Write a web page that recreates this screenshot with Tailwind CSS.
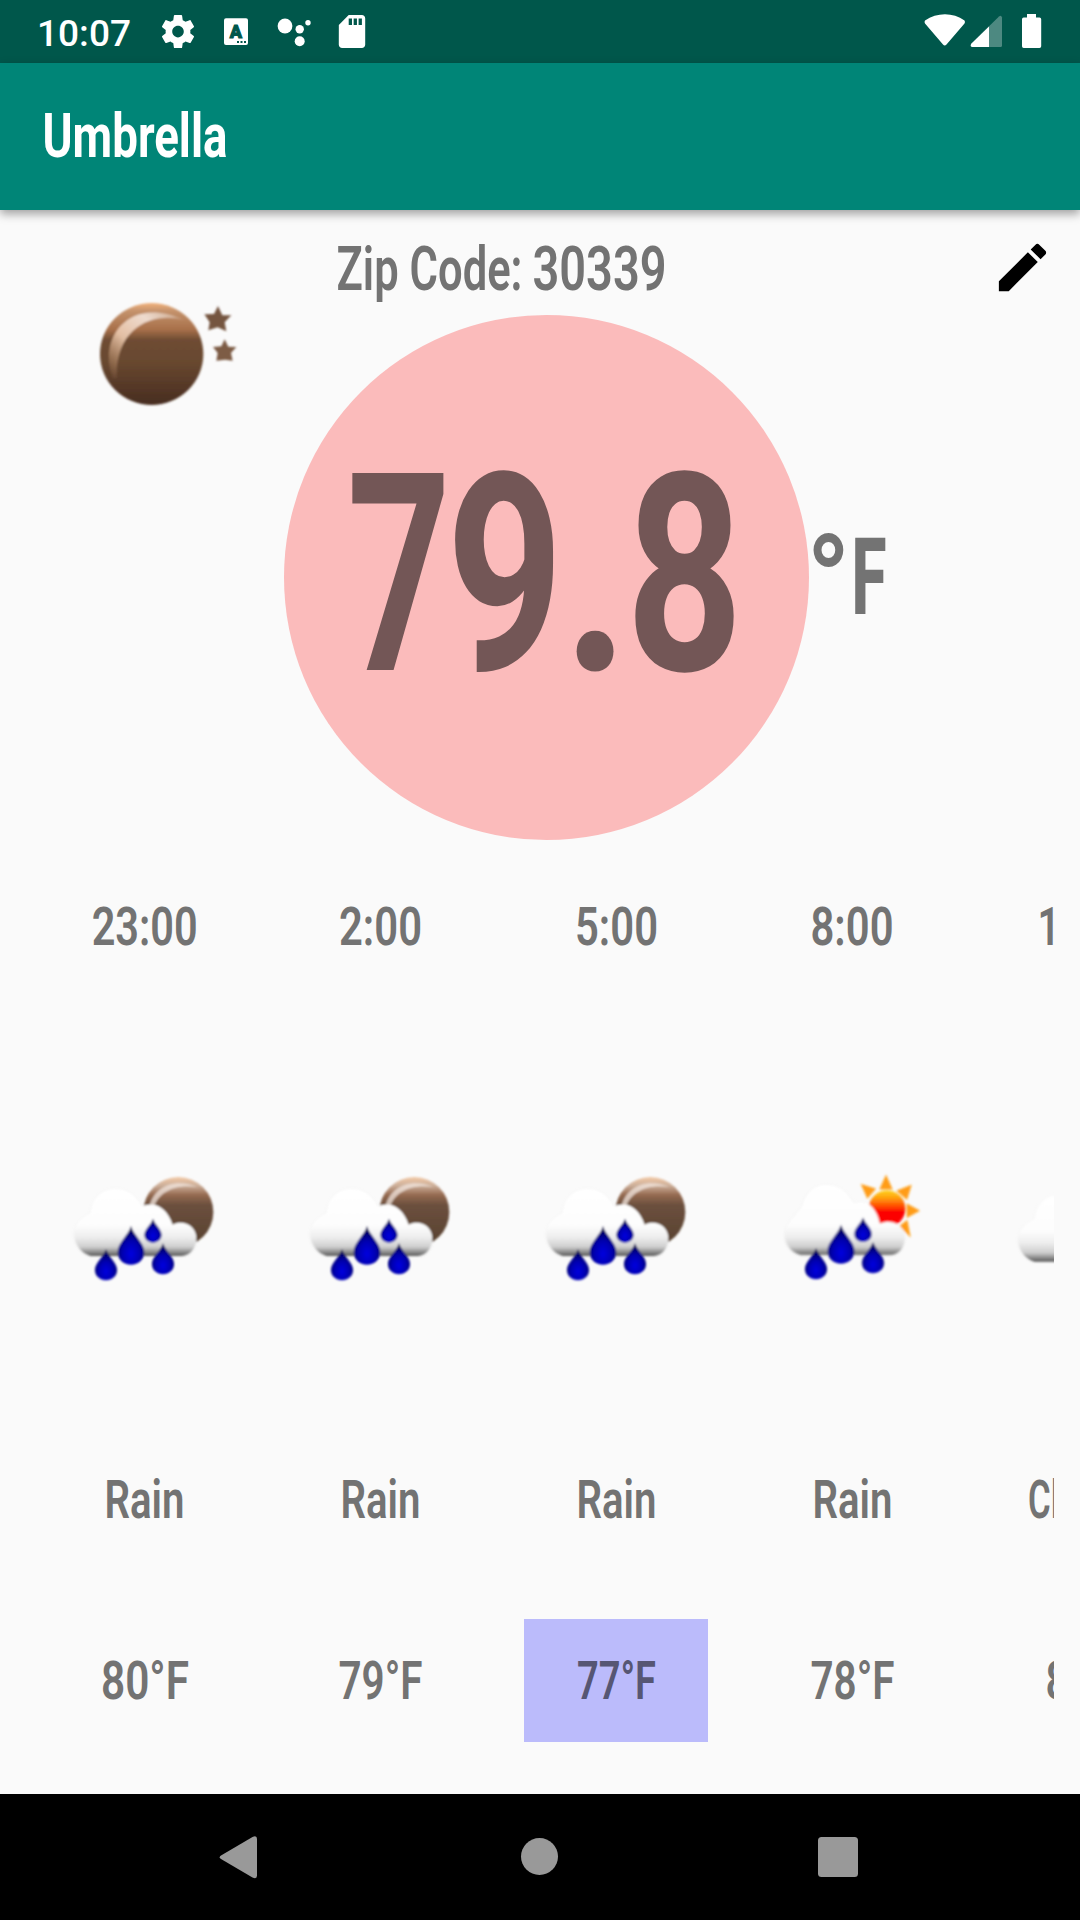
<!DOCTYPE html>
<html lang="en">
<head>
<meta charset="utf-8">
<title>Umbrella</title>
<script src="https://cdn.jsdelivr.net/npm/@tailwindcss/browser@4"></script>
</head>
<body class="w-[1080px] h-[1920px] overflow-hidden bg-[#fafafa] font-['Roboto',sans-serif] flex flex-col">

<svg class="absolute w-0 h-0" aria-hidden="true">
  <defs>
    <linearGradient id="moon" x1="0" y1="0" x2="0" y2="1">
      <stop offset="0" stop-color="#f2b27c"/><stop offset=".08" stop-color="#c4926c"/><stop offset=".26" stop-color="#a8704a"/><stop offset=".36" stop-color="#6f4d34"/><stop offset=".6" stop-color="#67472f"/><stop offset="1" stop-color="#472c20"/>
    </linearGradient>
    <linearGradient id="moonPale" x1="0" y1="0" x2="0" y2="1">
      <stop offset="0" stop-color="#f3c9a6"/><stop offset=".12" stop-color="#cdb09b"/><stop offset=".26" stop-color="#94694f"/><stop offset=".4" stop-color="#6c503e"/><stop offset="1" stop-color="#56402f"/>
    </linearGradient>
    <linearGradient id="shine" x1="1" y1="0" x2="0" y2="1">
      <stop offset="0" stop-color="#fff" stop-opacity=".1"/><stop offset=".3" stop-color="#f3e4da" stop-opacity=".9"/><stop offset=".6" stop-color="#ecc9ae" stop-opacity=".9"/><stop offset="1" stop-color="#d09a6c" stop-opacity="0"/>
    </linearGradient>
    <linearGradient id="cloud" gradientUnits="userSpaceOnUse" x1="0" y1="110" x2="0" y2="320">
      <stop offset="0" stop-color="#fff"/><stop offset=".55" stop-color="#fdfdfd"/><stop offset=".72" stop-color="#eee"/><stop offset=".86" stop-color="#cfcfcf"/><stop offset=".92" stop-color="#999"/><stop offset="1" stop-color="#505050"/>
    </linearGradient>
    <linearGradient id="sun" x1="0" y1="0" x2="0" y2="1">
      <stop offset="0" stop-color="#ffd21c"/><stop offset=".2" stop-color="#ffa310"/><stop offset=".48" stop-color="#ff3a00"/><stop offset=".6" stop-color="#fc0500"/><stop offset="1" stop-color="#fc0500"/>
    </linearGradient>
    <radialGradient id="drop" cx=".5" cy=".72" r=".66">
      <stop offset="0" stop-color="#0000e0"/><stop offset=".5" stop-color="#0000b0"/><stop offset="1" stop-color="#000048"/>
    </radialGradient>
    <filter id="soft" x="-10%" y="-10%" width="120%" height="120%"><feGaussianBlur stdDeviation="3.400"/></filter>
    <filter id="edge" x="-10%" y="-10%" width="120%" height="130%"><feDropShadow dx="0" dy="1" stdDeviation="3" flood-color="#000" flood-opacity=".09"/></filter>
    <path id="cloudShape" d="M122 318 C92 310 72 280 73 250 C76 218 98 200 122 190 C126 145 155 117 195 117 C235 117 260 138 274 170 C315 152 350 172 368 224 C400 208 438 228 439 262 C440 295 418 318 395 318 Z"/>
    <path id="dropShape" d="M0 -58 C8 -30 40 -8 40 20 C40 43 22 58 0 58 C-22 58 -40 43 -40 20 C-40 -8 -8 -30 0 -58Z" fill="url(#drop)"/>
    <g id="drops">
      <use href="#dropShape" transform="translate(243 286)"/>
      <use href="#dropShape" transform="translate(309 242) scale(.65 .62)"/>
      <use href="#dropShape" transform="translate(168 344) scale(.83 .8)"/>
      <use href="#dropShape" transform="translate(339 326) scale(.83 .8)"/>
    </g>
    <g id="rainNight" filter="url(#soft)">
      <circle cx="385" cy="186" r="105" fill="url(#moonPale)"/>
      <path d="M298 172 C308 116 370 80 442 112 C380 100 325 126 312 172Z" fill="#f2e6de" opacity=".75"/>
      <use href="#cloudShape" fill="url(#cloud)" filter="url(#edge)"/>
      <use href="#drops"/>
    </g>
    <g id="rainDay" transform="translate(6 0)" filter="url(#soft)">
      <g fill="#ff9c14">
        <path d="M378 74l20 44h-40z"/><path d="M302 102l46 14-26 30z"/><path d="M455 104l-14 46-32-28z"/><path d="M480 182l-40 22v-44z"/><path d="M452 262l-34-34 24-18z"/>
      </g>
      <circle cx="381" cy="176" r="55" fill="url(#sun)"/>
      <path d="M122 315 C92 306 72 280 75 250 C78 218 104 200 126 170 C136 125 165 104 200 104 C240 104 262 130 282 160 C320 145 350 172 360 220 C395 205 434 225 434 260 C434 295 415 315 390 315 Z" fill="url(#cloud)" filter="url(#edge)"/>
      <use href="#drops" transform="translate(0 -3)"/>
    </g>
  </defs>
</svg>

<!-- status bar -->
<header class="h-[63px] shrink-0 bg-[#00574b] flex justify-between">
  <div class="flex pl-9">
    <svg class="w-[104px] h-[63px]" viewBox="36 0 104 63"><text x="37" y="46" font-size="37" font-weight="500" fill="#fff" textLength="94" lengthAdjust="spacingAndGlyphs">10:07</text></svg>
    <svg class="w-[70px] h-[63px]" viewBox="140 0 70 63" fill="#fff"><path transform="translate(158.200 11.800) scale(1.65)" d="M19.430 12.980c.04-.32.07-.64.07-.98s-.03-.66-.07-.98l2.110-1.650c.19-.15.24-.42.12-.64l-2-3.460c-.12-.22-.39-.3-.61-.22l-2.490 1c-.52-.4-1.080-.73-1.690-.98l-.38-2.650C14.460 2.180 14.250 2 14 2h-4c-.25 0-.46.18-.49.42l-.38 2.650c-.61.25-1.170.59-1.690.98l-2.490-1c-.23-.09-.49 0-.61.22l-2 3.460c-.13.22-.07.49.12.64l2.110 1.650c-.04.32-.07.65-.07.98s.03.66.07.98l-2.110 1.650c-.19.15-.24.42-.12.64l2 3.460c.12.22.39.3.61.22l2.490-1c.52.4 1.080.73 1.690.98l.38 2.650c.03.24.24.42.49.42h4c.25 0 .46-.18.49-.42l.38-2.650c.61-.25 1.170-.59 1.690-.98l2.490 1c.23.09.49 0 .61-.22l2-3.460c.12-.22.07-.49-.12-.64l-2.110-1.650zM12 15.500c-1.930 0-3.500-1.570-3.500-3.500s1.570-3.500 3.500-3.500 3.500 1.570 3.500 3.500-1.570 3.500-3.500 3.500z"/></svg>
    <svg class="w-[56px] h-[63px]" viewBox="210 0 56 63"><rect x="224" y="18.300" width="24" height="26.700" rx="2" fill="#fff"/><text x="236" y="37.500" text-anchor="middle" font-size="18" font-weight="900" fill="#00574b" stroke="#00574b">A</text><path fill="#00574b" d="M237 41h2v2h-2zM240.500 41h2v2h-2zM244 41h2v2h-2z"/></svg>
    <svg class="w-[60px] h-[63px]" viewBox="266 0 60 63" fill="#fff"><circle cx="285" cy="26" r="7.400"/><circle cx="299.700" cy="29.200" r="4.200"/><circle cx="308" cy="22.700" r="2.700"/><circle cx="299.700" cy="41.300" r="5"/></svg>
    <svg class="w-[50px] h-[63px]" viewBox="326 0 50 63" fill="#fff"><path transform="translate(332.200 11.800) scale(1.65)" d="M18 2h-8L4.020 8 4 20c0 1.100.9 2 2 2h12c1.100 0 2-.9 2-2V4c0-1.100-.9-2-2-2zm-6 6h-2V4h2v4zm3 0h-2V4h2v4zm3 0h-2V4h2v4z"/></svg>
  </div>
  <div class="flex">
    <svg class="w-[48px] h-[63px]" viewBox="920 0 48 63" fill="#fff"><path d="M925 20.500C937 12 953 12 964.500 20.500Q965.500 22 964.500 23.500L946.500 44.500Q944.700 46.500 943 44.500L925 23.500Q924 22 925 20.500Z"/></svg>
    <svg class="w-[42px] h-[63px]" viewBox="968 0 42 63" fill="#fff"><path opacity=".3" d="M973 47h27.500q1.500 0 1.500-1.500v-28q-.8-3-3-1L971.500 43.500q-1.500 2.500 1.500 3.500z"/><path d="M989 26.500L971.500 43.500Q969.500 46 972 47H989Z"/></svg>
    <svg class="w-[70px] h-[63px]" viewBox="1010 0 70 63" fill="#fff"><path d="M1027 14h9v3.500h3.500q1.700 0 1.700 1.700v27q0 1.700-1.700 1.700h-15.800q-1.700 0-1.700-1.700v-27q0-1.700 1.700-1.700h3.300z"/></svg>
  </div>
</header>

<!-- app bar -->
<div class="h-[147px] shrink-0 bg-[#008577] shadow-[0_4px_9px_rgba(0,0,0,0.36)] flex items-center pl-10 relative">
  <svg class="w-[240px] h-[147px] overflow-visible" viewBox="40 63 240 147"><text x="42.500" y="156.700" font-size="61" font-weight="700" fill="#fff" textLength="185" lengthAdjust="spacingAndGlyphs">Umbrella</text></svg>
</div>

<main class="h-[1584px] shrink-0 flex flex-col">
  <div class="h-[105px] flex justify-between pl-[330px] pr-[26px]">
    <svg class="w-[350px] h-[105px] overflow-visible" viewBox="330 210 350 105"><text y="290" font-size="61" font-weight="600" fill="#737373"><tspan x="336.500" textLength="186" lengthAdjust="spacingAndGlyphs">Zip Code:</tspan> <tspan x="532.500" textLength="134" lengthAdjust="spacingAndGlyphs">30339</tspan></text></svg>
    <svg class="w-[63px] h-[63px] mt-[26px]" viewBox="0 0 24 24"><path d="M3 17.250V21h3.750L17.810 9.940l-3.750-3.750L3 17.250zM20.710 7.040c.39-.39.39-1.020 0-1.410l-2.340-2.340c-.39-.39-1.020-.39-1.410 0l-1.830 1.830 3.750 3.750 1.830-1.830z"/></svg>
  </div>

  <!-- current conditions -->
  <div class="h-[525px] flex">
    <svg class="w-[284px] h-[525px] shrink-0 overflow-visible" viewBox="0 315 284 525">
      <g transform="translate(60 270) scale(.33333)" filter="url(#soft)">
        <ellipse cx="275" cy="252" rx="155" ry="153" fill="url(#moon)"/>
        <path d="M158 325 C112 200 210 75 372 150 C280 125 165 170 170 325Z" fill="url(#shine)"/>
        <path fill="#75543f" d="M474 108l13 28 27 0-20 21 5 27-26-12-28 9 4-24-16-24 29-1z"/>
        <path fill="#7d5b45" d="M494 208l11 22 24 1-16 18 5 23-23-3-26 3 4-23-14-18 25-2z"/>
      </g>
    </svg>
    <div class="size-[525px] shrink-0 rounded-full bg-[#fbbbbb]">
      <svg class="size-[525px]" viewBox="284 315 525 525">
        <text y="670" font-size="277" font-weight="700" fill="#735656"><tspan x="347" textLength="104" lengthAdjust="spacingAndGlyphs">7</tspan><tspan x="446.500" textLength="117" lengthAdjust="spacingAndGlyphs">9</tspan><tspan x="562.500" textLength="67" lengthAdjust="spacingAndGlyphs">.</tspan><tspan x="626" textLength="117" lengthAdjust="spacingAndGlyphs">8</tspan></text>
      </svg>
    </div>
    <svg class="w-[100px] h-[525px] shrink-0 overflow-visible" viewBox="809 315 100 525"><text fill="#737373"><tspan x="806.500" y="624.500" font-size="128" font-weight="700" textLength="44" lengthAdjust="spacingAndGlyphs">°</tspan><tspan x="851.500" y="614" font-size="108" font-weight="800" textLength="35" lengthAdjust="spacingAndGlyphs">F</tspan></text></svg>
  </div>

  <!-- forecast strip -->
  <div class="h-[954px] mx-[26px] flex overflow-hidden text-[54px] font-semibold">
    <div class="w-[236px] shrink-0 pt-10 flex flex-col">
      <svg class="w-[236px] h-[90px]" fill="#737373"><text x="118.700" y="64.600" text-anchor="middle" textLength="106" lengthAdjust="spacingAndGlyphs">23:00</text></svg>
      <svg class="w-[236px] h-[160px] mt-[180px]" viewBox="-72 0 708 480"><use href="#rainNight"/></svg>
      <svg class="w-[236px] h-[80px] mt-[150px]" fill="#737373"><text x="118.500" y="58" text-anchor="middle" textLength="80" lengthAdjust="spacingAndGlyphs">Rain</text></svg>
      <div class="w-[184px] h-[123px] mt-[79px] mx-[26px]"><svg class="w-[184px] h-[123px]" fill="#737373"><text x="93" y="80" text-anchor="middle" textLength="88" lengthAdjust="spacingAndGlyphs">80°F</text></svg></div>
    </div>
    <div class="w-[236px] shrink-0 pt-10 flex flex-col">
      <svg class="w-[236px] h-[90px]" fill="#737373"><text x="118.500" y="64.600" text-anchor="middle" textLength="83" lengthAdjust="spacingAndGlyphs">2:00</text></svg>
      <svg class="w-[236px] h-[160px] mt-[180px]" viewBox="-72 0 708 480"><use href="#rainNight"/></svg>
      <svg class="w-[236px] h-[80px] mt-[150px]" fill="#737373"><text x="118.500" y="58" text-anchor="middle" textLength="80" lengthAdjust="spacingAndGlyphs">Rain</text></svg>
      <div class="w-[184px] h-[123px] mt-[79px] mx-[26px]"><svg class="w-[184px] h-[123px]" fill="#737373"><text x="92.500" y="80" text-anchor="middle" textLength="84" lengthAdjust="spacingAndGlyphs">79°F</text></svg></div>
    </div>
    <div class="w-[236px] shrink-0 pt-10 flex flex-col">
      <svg class="w-[236px] h-[90px]" fill="#737373"><text x="118.500" y="64.600" text-anchor="middle" textLength="83" lengthAdjust="spacingAndGlyphs">5:00</text></svg>
      <svg class="w-[236px] h-[160px] mt-[180px]" viewBox="-72 0 708 480"><use href="#rainNight"/></svg>
      <svg class="w-[236px] h-[80px] mt-[150px]" fill="#737373"><text x="118.500" y="58" text-anchor="middle" textLength="80" lengthAdjust="spacingAndGlyphs">Rain</text></svg>
      <div class="w-[184px] h-[123px] mt-[79px] mx-[26px] bg-[#bbbbfb]"><svg class="w-[184px] h-[123px]" fill="#565673"><text x="92.500" y="80" text-anchor="middle" textLength="79" lengthAdjust="spacingAndGlyphs">77°F</text></svg></div>
    </div>
    <div class="w-[236px] shrink-0 pt-10 flex flex-col">
      <svg class="w-[236px] h-[90px]" fill="#737373"><text x="118" y="64.600" text-anchor="middle" textLength="83" lengthAdjust="spacingAndGlyphs">8:00</text></svg>
      <svg class="w-[236px] h-[160px] mt-[180px]" viewBox="-72 0 708 480"><use href="#rainDay"/></svg>
      <svg class="w-[236px] h-[80px] mt-[150px]" fill="#737373"><text x="118.500" y="58" text-anchor="middle" textLength="80" lengthAdjust="spacingAndGlyphs">Rain</text></svg>
      <div class="w-[184px] h-[123px] mt-[79px] mx-[26px]"><svg class="w-[184px] h-[123px]" fill="#737373"><text x="92.500" y="80" text-anchor="middle" textLength="84" lengthAdjust="spacingAndGlyphs">78°F</text></svg></div>
    </div>
    <div class="w-[236px] shrink-0 pt-10 flex flex-col">
      <svg class="w-[236px] h-[90px]" fill="#737373"><text x="118" y="64.600" text-anchor="middle" textLength="101" lengthAdjust="spacingAndGlyphs">11:00</text></svg>
      <svg class="w-[236px] h-[160px] mt-[180px]" viewBox="-72 0 708 480"><g filter="url(#soft)"><use href="#cloudShape" transform="translate(0 17)" fill="url(#cloud)" filter="url(#edge)"/></g></svg>
      <svg class="w-[236px] h-[80px] mt-[150px]" fill="#737373"><text x="58" y="58" textLength="108" lengthAdjust="spacingAndGlyphs">Clouds</text></svg>
      <div class="w-[184px] h-[123px] mt-[79px] mx-[26px]"><svg class="w-[184px] h-[123px]" fill="#737373"><text x="92.500" y="80" text-anchor="middle" textLength="86" lengthAdjust="spacingAndGlyphs">80°F</text></svg></div>
    </div>
  </div>
</main>

<!-- navigation bar -->
<nav class="h-[126px] shrink-0 bg-black flex">
  <svg class="w-[1080px] h-[126px]" viewBox="0 1794 1080 126" fill="#999">
    <path d="M221 1855.500L252.500 1837Q257 1835 257 1839V1875.500Q257 1879.500 252.500 1877.500L221 1859Q218.500 1857 221 1855.500Z"/>
    <circle cx="539.500" cy="1856.500" r="18.500"/>
    <rect x="818" y="1837" width="40" height="40" rx="3.500"/>
  </svg>
</nav>
</body>
</html>
